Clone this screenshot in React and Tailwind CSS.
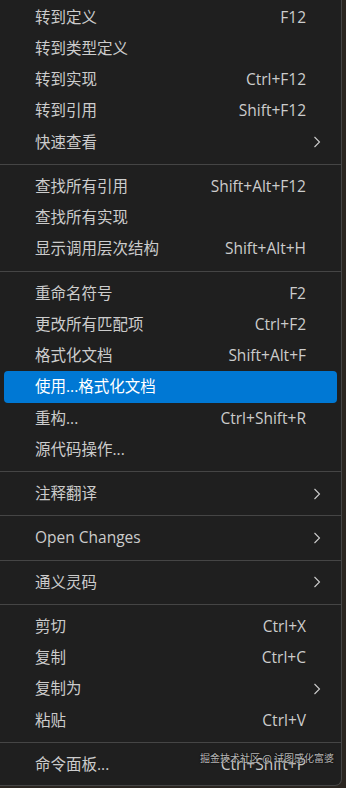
const groups = [
  [
    { label: "转到定义", key: "F12" },
    { label: "转到类型定义" },
    { label: "转到实现", key: "Ctrl+F12" },
    { label: "转到引用", key: "Shift+F12" },
    { label: "快速查看", sub: true },
  ],
  [
    { label: "查找所有引用", key: "Shift+Alt+F12" },
    { label: "查找所有实现" },
    { label: "显示调用层次结构", key: "Shift+Alt+H" },
  ],
  [
    { label: "重命名符号", key: "F2" },
    { label: "更改所有匹配项", key: "Ctrl+F2" },
    { label: "格式化文档", key: "Shift+Alt+F" },
    { label: "使用...格式化文档", active: true },
    { label: "重构...", key: "Ctrl+Shift+R" },
    { label: "源代码操作..." },
  ],
  [{ label: "注释翻译", sub: true }],
  [{ label: "Open Changes", sub: true }],
  [{ label: "通义灵码", sub: true }],
  [
    { label: "剪切", key: "Ctrl+X" },
    { label: "复制", key: "Ctrl+C" },
    { label: "复制为", sub: true },
    { label: "粘贴", key: "Ctrl+V" },
  ],
  [{ label: "命令面板...", key: "Ctrl+Shift+P" }],
];

function Chevron() {
  return (
    <svg width="8" height="12" viewBox="0 0 8 12" fill="none">
      <path d="M1.5 1 L6.5 6 L1.5 11" stroke="#cccccc" strokeWidth="1.1" />
    </svg>
  );
}

function Row({ item }) {
  return (
    <div
      className={
        "mx-[4px] h-[31.25px] flex items-center pl-[31px] pr-[16px] rounded-[4px] " +
        (item.active ? "bg-[#0078d4] text-white" : "text-[#cccccc]")
      }
    >
      <span className="flex-1">{item.label}</span>
      {item.key && <span>{item.key}</span>}
      <span className="w-[15px] flex justify-end">{item.sub && <Chevron />}</span>
    </div>
  );
}

export default function App() {
  return (
    <div
      className="relative w-[346px] h-[788px] bg-[#2a2520] overflow-hidden text-[15.5px]"
      style={{ fontFamily: '"Open Sans", "Noto Sans CJK SC", sans-serif' }}
    >
      <div className="w-[342px] h-[786px] bg-[#1f1f1f] border-r border-b border-[#454545] rounded-br-[7px] pt-[1.5px]">
        {groups.map((g, i) => (
          <div key={i}>
            {i > 0 && <div className="my-[6px] h-px bg-[#454545]" />}
            {g.map((item) => (
              <Row key={item.label} item={item} />
            ))}
          </div>
        ))}
      </div>
      <div
        className="absolute right-[12px] bottom-[25px] text-[10px] leading-none text-[#c8c8c8]/90"
        style={{ fontFamily: '"Noto Sans CJK SC", sans-serif', textShadow: "0 0 2px #000" }}
      >
        掘金技术社区 @ 试图感化富婆
      </div>
    </div>
  );
}
